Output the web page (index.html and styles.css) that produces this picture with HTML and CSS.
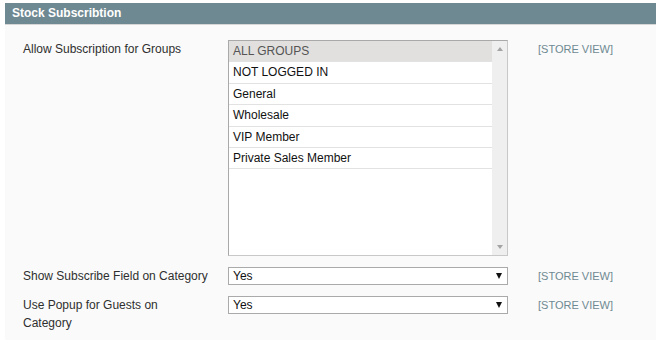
FILE: index.html
```html
<!DOCTYPE html>
<html lang="en">
<head>
    <meta charset="UTF-8">
    <title>Stock Subscribtion</title>
    <link rel="stylesheet" href="styles.css">
</head>
<body>

    <div class="entry-edit">
        <div class="entry-edit-head">Stock Subscribtion</div>

        <div class="fieldset">
            <table class="form-list">
                <tr>
                    <td class="label">Allow Subscription for Groups</td>
                    <td class="value">
                        <div class="multiselect">
                            <ul class="options">
                                <li class="selected">ALL GROUPS</li>
                                <li>NOT LOGGED IN</li>
                                <li>General</li>
                                <li>Wholesale</li>
                                <li>VIP Member</li>
                                <li>Private Sales Member</li>
                            </ul>
                            <div class="scrollbar">
                                <span class="arrow-up"></span>
                                <span class="arrow-down"></span>
                            </div>
                        </div>
                    </td>
                    <td class="scope-label">[STORE VIEW]</td>
                </tr>
                <tr>
                    <td class="label">Show Subscribe Field on Category</td>
                    <td class="value">
                        <div class="select-wrap">
                            <select class="select">
                                <option>Yes</option>
                                <option>No</option>
                            </select>
                        </div>
                    </td>
                    <td class="scope-label">[STORE VIEW]</td>
                </tr>
                <tr>
                    <td class="label">Use Popup for Guests on Category</td>
                    <td class="value">
                        <div class="select-wrap">
                            <select class="select">
                                <option>Yes</option>
                                <option>No</option>
                            </select>
                        </div>
                    </td>
                    <td class="scope-label">[STORE VIEW]</td>
                </tr>
            </table>
        </div>
    </div>

</body>
</html>
```

FILE: styles.css
```css
/* --- base --- */
body {
    margin: 0;
    background: #fff;
    color: #2f2f2f;
    font-family: "Liberation Sans", Arial, sans-serif;
    font-size: 12px;
}

/* --- section box --- */
.entry-edit {
    margin: 3px 4px 0 5px;
}
.entry-edit-head {
    height: 21px;
    line-height: 21px;
    padding-left: 7px;
    background: #6f8992;
    color: #fff;
    font-weight: bold;
}
.fieldset {
    background: #fafafa;
    border-top: 1px solid #d6d6d6;
    padding: 10px 0 2px 18px;
}

/* --- form rows --- */
.form-list { border-collapse: collapse; }
.form-list td {
    padding: 5px 0 6px 0;
    vertical-align: top;
    line-height: 18px;
}
.form-list td.label {
    width: 186px;
    padding-right: 19px;
}
.form-list td.value { width: 280px; }
.form-list td.scope-label {
    padding-left: 30px;
    color: #6f8992;
    font-size: 11px;
    white-space: nowrap;
}

/* --- multiselect list --- */
.multiselect {
    display: flex;
    height: 214px;
    border: 1px solid;
    border-color: #a9a9a9 #c8c8c8 #c8c8c8 #a9a9a9;
    background: #fff;
}
.options {
    flex: 1;
    margin: 0;
    padding: 0;
    list-style: none;
}
.options li {
    height: 20.4px;
    line-height: 21px;
    padding-left: 4px;
    border-bottom: 1px solid #e2e2e2;
    color: #111;
}
.options li.selected {
    background: #e1e0de;
    color: #555;
}
.scrollbar {
    width: 15px;
    background: #efefef;
    display: flex;
    flex-direction: column;
    justify-content: space-between;
    align-items: center;
    padding: 6px 0 6px 0;
}
.arrow-up, .arrow-down {
    width: 0; height: 0;
    border-left: 3.5px solid transparent;
    border-right: 3.5px solid transparent;
}
.arrow-up { border-bottom: 4px solid #a3a3a3; }
.arrow-down { border-top: 4px solid #a3a3a3; }

/* --- dropdowns --- */
.select-wrap { position: relative; }
.select-wrap::after {
    content: "";
    position: absolute;
    top: 6px; right: 6px;
    border-left: 3px solid transparent;
    border-right: 3px solid transparent;
    border-top: 6px solid #111;
}
.select {
    display: block;
    width: 280px;
    height: 18px;
    margin: 0;
    padding: 0 0 0 4px;
    border: 1px solid #aaa;
    border-radius: 0;
    background: #fff;
    color: #111;
    font-family: inherit;
    font-size: 12px;
    line-height: 16px;
    -webkit-appearance: none;
    appearance: none;
}
```
